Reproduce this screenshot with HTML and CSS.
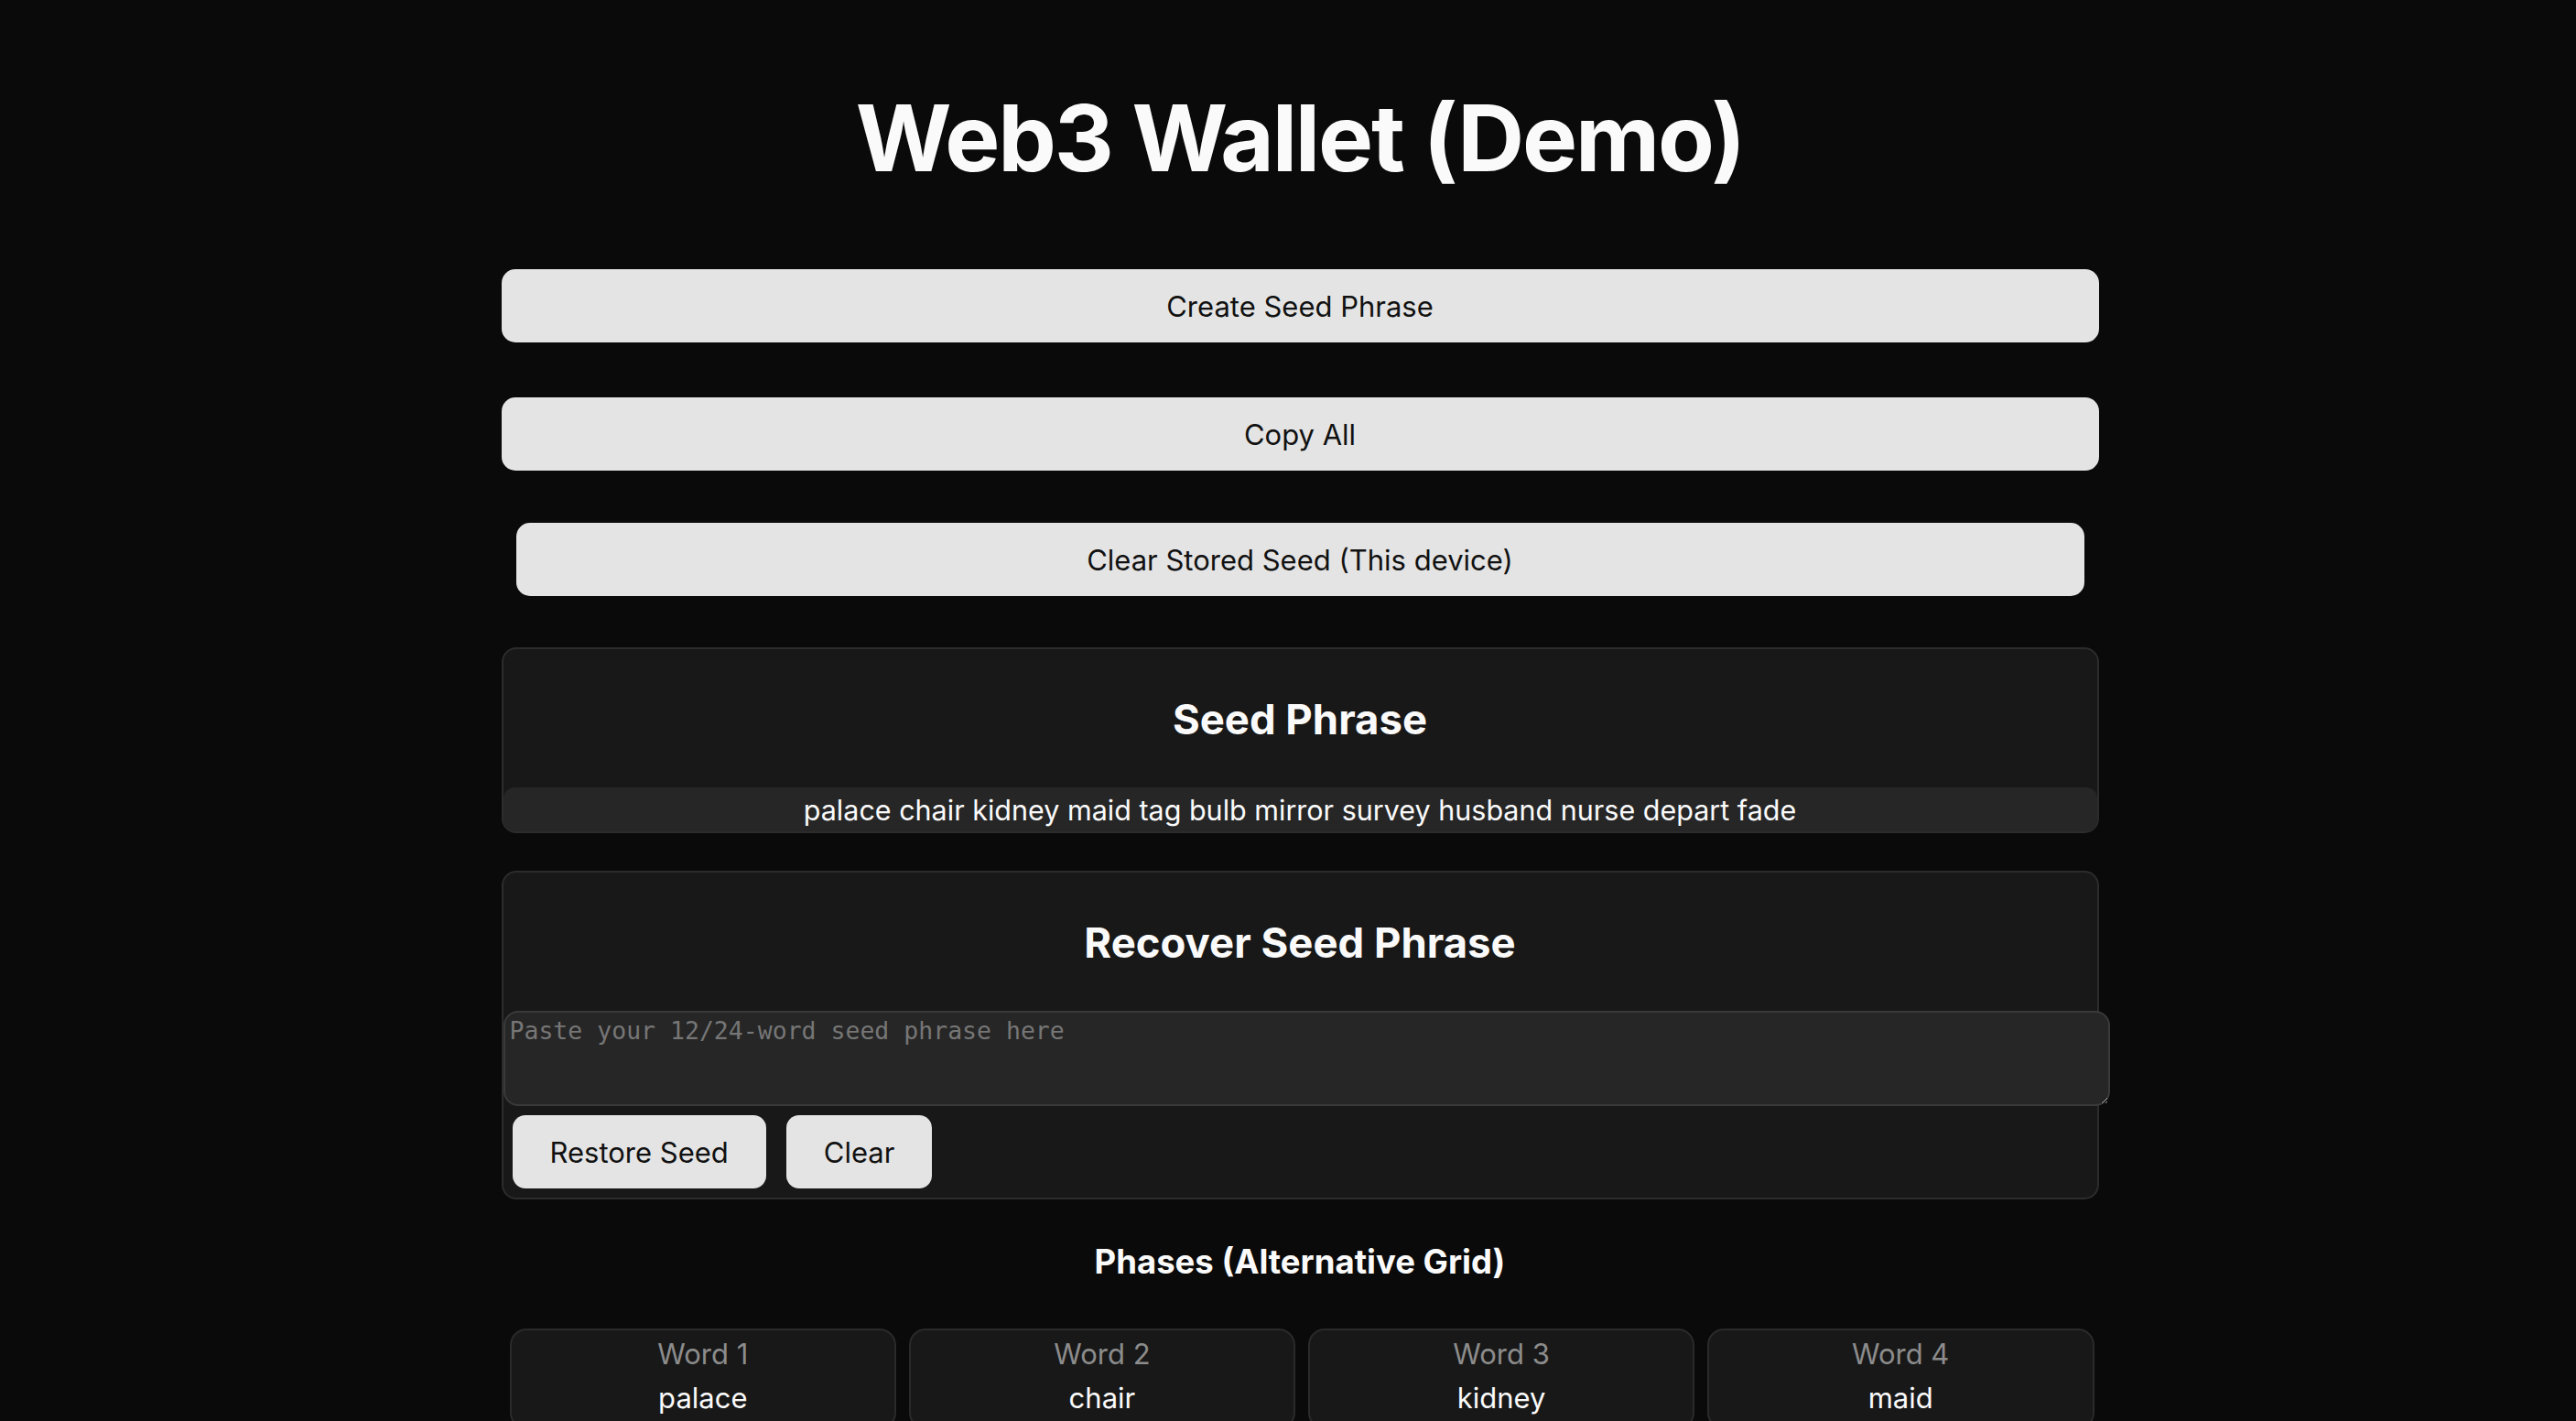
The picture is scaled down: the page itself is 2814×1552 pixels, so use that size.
FILE: index.html
```html
<!DOCTYPE html>
<html lang="en">
<head>
<meta charset="utf-8">
<title>Web3 Wallet (Demo)</title>
<link rel="stylesheet" href="styles.css">
</head>
<body>
<main class="page">
  <h1 class="title">Web3 Wallet (Demo)</h1>

  <button class="btn btn-wide btn-create">Create Seed Phrase</button>
  <button class="btn btn-wide btn-copy">Copy All</button>
  <button class="btn btn-wide btn-inset">Clear Stored Seed (This device)</button>

  <section class="card seed-card">
    <h2 class="card-title">Seed Phrase</h2>
    <div class="phrase">palace chair kidney maid tag bulb mirror survey husband nurse depart fade</div>
  </section>

  <section class="card recover-card">
    <h2 class="card-title">Recover Seed Phrase</h2>
    <textarea class="recover-input" placeholder="Paste your 12/24-word seed phrase here"></textarea>
    <div class="actions">
      <button class="btn btn-small">Restore Seed</button>
      <button class="btn btn-small">Clear</button>
    </div>
  </section>

  <h3 class="grid-title">Phases (Alternative Grid)</h3>
  <div class="word-grid">
    <div class="word"><div class="word-label">Word 1</div><div class="word-value">palace</div></div>
    <div class="word"><div class="word-label">Word 2</div><div class="word-value">chair</div></div>
    <div class="word"><div class="word-label">Word 3</div><div class="word-value">kidney</div></div>
    <div class="word"><div class="word-label">Word 4</div><div class="word-value">maid</div></div>
    <div class="word"><div class="word-label">Word 5</div><div class="word-value">tag</div></div>
    <div class="word"><div class="word-label">Word 6</div><div class="word-value">bulb</div></div>
    <div class="word"><div class="word-label">Word 7</div><div class="word-value">mirror</div></div>
    <div class="word"><div class="word-label">Word 8</div><div class="word-value">survey</div></div>
    <div class="word"><div class="word-label">Word 9</div><div class="word-value">husband</div></div>
    <div class="word"><div class="word-label">Word 10</div><div class="word-value">nurse</div></div>
    <div class="word"><div class="word-label">Word 11</div><div class="word-value">depart</div></div>
    <div class="word"><div class="word-label">Word 12</div><div class="word-value">fade</div></div>
  </div>
</main>
</body>
</html>
```

FILE: styles.css
```css
html, body {
  margin: 0;
  background: #0a0a0a;
}

body {
  padding: 0 0 0 26px;
  font-family: Inter, "Noto Sans", "Liberation Sans", sans-serif;
  color: #fafafa;
}

.page {
  width: 1745px;
  margin: 0 auto;
  padding-top: 88px;
  display: flex;
  flex-direction: column;
}

.title {
  margin: 0 0 81px;
  font-size: 101px;
  line-height: 125px;
  font-weight: 700;
  text-align: center;
  letter-spacing: -2.2px;
}

.btn {
  font-family: Inter, "Noto Sans", "Liberation Sans", sans-serif;
  font-size: 31px;
  color: #111111;
  background: #e4e4e4;
  border: none;
  border-radius: 15px;
  height: 80px;
  padding: 0 40px;
  cursor: pointer;
}

.btn-wide {
  width: 100%;
}

.btn-create { margin-bottom: 60px; }
.btn-copy { margin-bottom: 57px; }

.btn-inset {
  width: auto;
  margin: 0 16px 56px;
}

.card {
  background: #181818;
  border: 2px solid #2c2c2c;
  border-radius: 16px;
  overflow: hidden;
}

.seed-card {
  margin-bottom: 41px;
}

.card-title {
  margin: 48px 0 46px;
  font-size: 45.5px;
  line-height: 57px;
  font-weight: 700;
  text-align: center;
}

.phrase {
  background: #262626;
  border-radius: 12px 12px 0 0;
  font-size: 30.5px;
  line-height: 46px;
  padding-top: 2px;
  text-align: center;
  color: #fafafa;
}

.recover-card {
  overflow: visible;
}

.recover-input {
  display: block;
  width: 100%;
  height: 90px;
  margin: 0;
  padding: 5px;
  background: #262626;
  border: 2px solid #3a3a3a;
  border-radius: 16px;
  color: #fafafa;
  font-family: "DejaVu Sans Mono", monospace;
  font-size: 26.5px;
  line-height: 1.1;
  resize: both;
}

.recover-input::placeholder {
  color: #767676;
}

.actions {
  display: flex;
  gap: 22px;
  padding: 10px;
}

.btn-small {
  border-radius: 14px;
  padding: 0 41px;
}

.grid-title {
  margin: 47px 0 52px;
  font-size: 36.5px;
  line-height: 42px;
  font-weight: 700;
  text-align: center;
}

.word-grid {
  display: grid;
  grid-template-columns: repeat(4, 1fr);
  gap: 13.5px;
  padding: 0 5px 40px 9px;
}

.word {
  background: #181818;
  border: 2px solid #2a2a2a;
  border-radius: 18px;
  text-align: center;
  padding: 2px 0 8px;
}

.word-label {
  font-size: 31px;
  line-height: 48px;
  color: #8c8c8c;
}

.word-value {
  font-size: 31px;
  line-height: 48px;
  color: #fafafa;
}
```
